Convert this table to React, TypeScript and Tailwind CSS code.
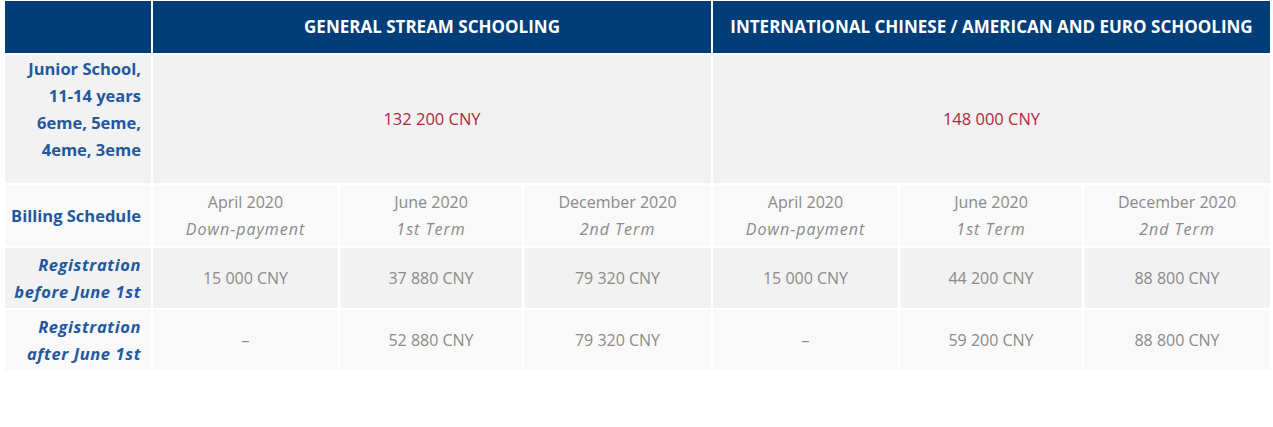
import React from "react";

const F = { fontFamily: '"Open Sans", "Noto Sans", Arial, sans-serif' };

function Head({ children, span }: { children?: React.ReactNode; span?: boolean }) {
  return (
    <div
      className={`${span ? "col-span-3" : ""} bg-[#003d79] text-white font-bold text-[17px] flex items-center justify-center`}
    >
      {children}
    </div>
  );
}

function Label({ children, bg, italic }: { children: React.ReactNode; bg: string; italic?: boolean }) {
  return (
    <div
      className={`${bg} text-[#22589e] font-bold text-[16.5px] leading-[27px] text-right pr-[10px] flex flex-col justify-center ${italic ? "italic tracking-[0.6px]" : ""}`}
    >
      {children}
    </div>
  );
}

function Cell({ children, bg }: { children: React.ReactNode; bg: string }) {
  return (
    <div className={`${bg} text-[#8a8a8a] text-[16px] leading-[27px] text-center flex flex-col justify-center`}>
      {children}
    </div>
  );
}

export default function App() {
  const A = "bg-[#f2f2f2]";
  const B = "bg-[#f9f9f9]";
  const billing = [
    ["April 2020", "Down-payment"],
    ["June 2020", "1st Term"],
    ["December 2020", "2nd Term"],
  ];
  const before = ["15 000 CNY", "37 880 CNY", "79 320 CNY", "15 000 CNY", "44 200 CNY", "88 800 CNY"];
  const after = ["–", "52 880 CNY", "79 320 CNY", "–", "59 200 CNY", "88 800 CNY"];
  return (
    <div className="w-[1273px] h-[427px] bg-white pt-px pl-[5px]" style={F}>
      <div className="grid grid-cols-[146px_185px_182px_187px_185px_182px_186px] grid-rows-[52px_128px_61px_60px_60px] gap-[2px]">
        <Head />
        <Head span>GENERAL STREAM SCHOOLING</Head>
        <Head span>INTERNATIONAL CHINESE / AMERICAN AND EURO SCHOOLING</Head>

        <div className={`${A} text-[#22589e] font-bold text-[16.5px] leading-[27px] text-right pr-[10px] pb-5 flex flex-col justify-start`}>
          <span>Junior School,</span>
          <span>11-14 years</span>
          <span>6eme, 5eme,</span>
          <span>4eme, 3eme</span>
        </div>
        <div className={`${A} col-span-3 flex items-center justify-center text-[#b0273a] text-[16.5px]`}>132 200 CNY</div>
        <div className={`${A} col-span-3 flex items-center justify-center text-[#b0273a] text-[16.5px]`}>148 000 CNY</div>

        <Label bg={B}>Billing Schedule</Label>
        {[...billing, ...billing].map(([d, t], i) => (
          <Cell key={"b" + i} bg={B}>
            <span>{d}</span>
            <span className="italic tracking-[1px]">{t}</span>
          </Cell>
        ))}

        <Label bg={A} italic>
          <span>Registration</span>
          <span>before June 1st</span>
        </Label>
        {before.map((v, i) => (
          <Cell key={"r" + i} bg={A}>
            {v}
          </Cell>
        ))}

        <Label bg={B} italic>
          <span>Registration</span>
          <span>after June 1st</span>
        </Label>
        {after.map((v, i) => (
          <Cell key={"a" + i} bg={B}>
            {v}
          </Cell>
        ))}
      </div>
    </div>
  );
}
